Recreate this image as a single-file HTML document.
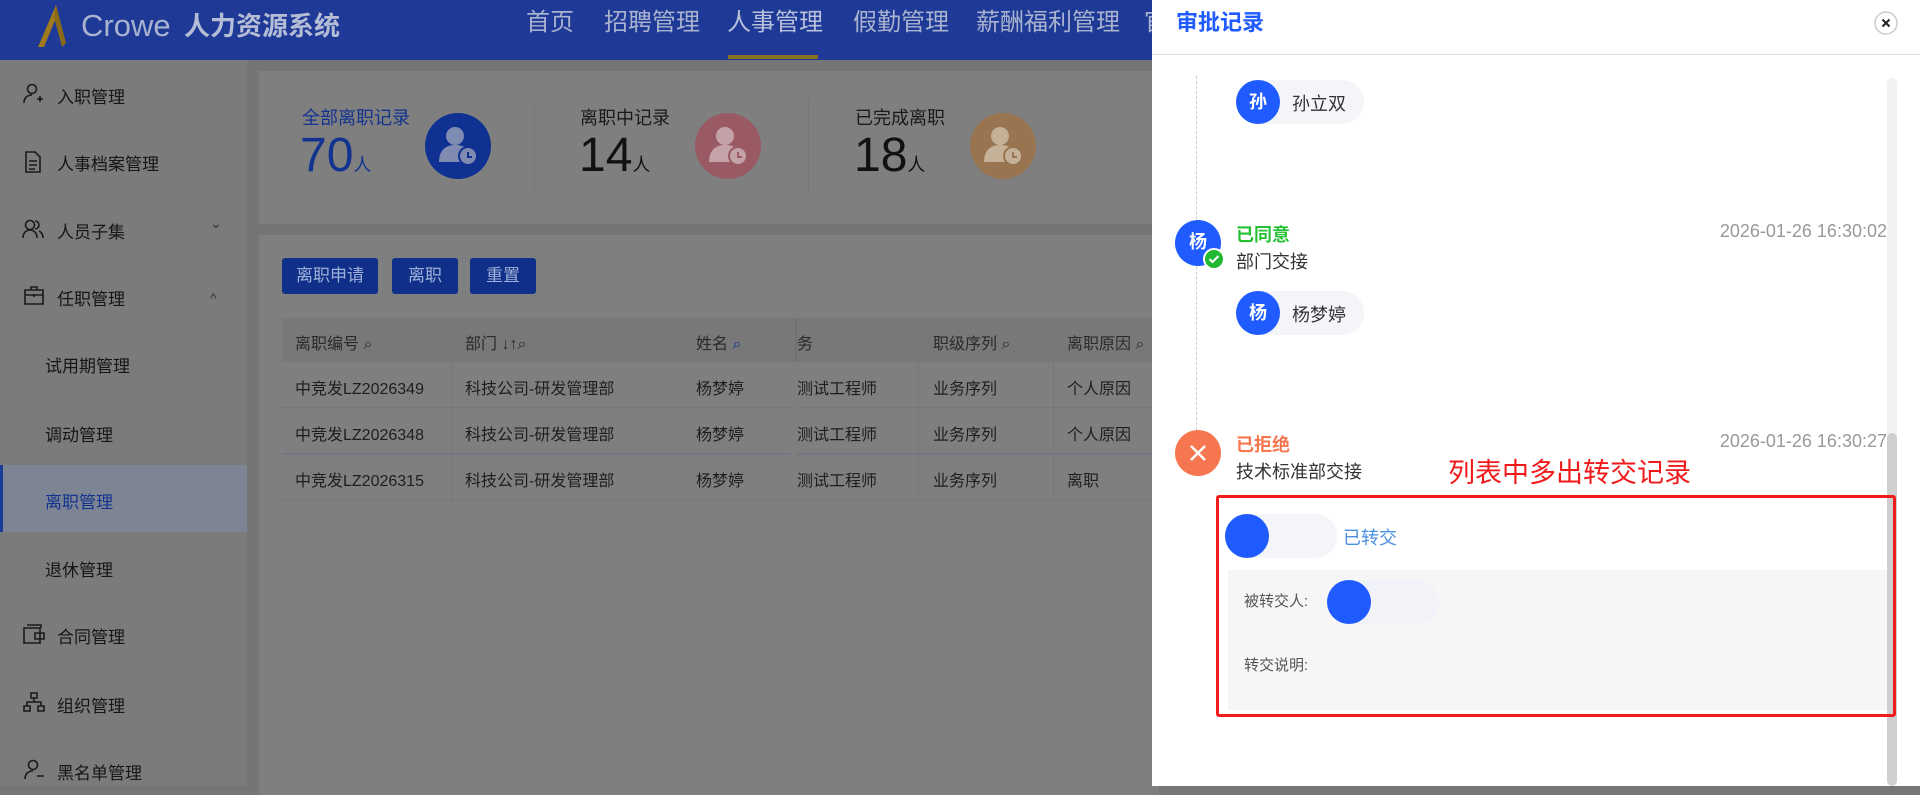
<!DOCTYPE html>
<html><head><meta charset="utf-8"><style>
*{margin:0;padding:0;box-sizing:border-box}
body{width:1920px;height:786px;overflow:hidden;position:relative;background:#757575;font-family:"Liberation Sans","Noto Sans CJK SC",sans-serif;color:#1a1a1a}
.a{position:absolute;white-space:nowrap}
.hdr{left:0;top:0;width:1920px;height:60px;background:#1e3a96}
.nav{top:6px;font-size:24px;color:#a9b2cf;line-height:34px}
.side{left:0;top:60px;width:247px;height:726px;background:#7b7b7b}
.si{left:57px;font-size:17px;color:#161616}
.sub{left:45px;font-size:17px;color:#161616}
.card{background:#7f7f7f}
.btn{top:258px;height:36px;background:#0f2f88;color:#9fb0d8;font-size:17px;line-height:36px;text-align:center;border-radius:3px}
.th{font-size:16px;color:#2a2a2a}
.td{font-size:16px;color:#1e1e1e}
.drawer{left:1152px;top:0;width:768px;height:786px;background:#fff}
.pill{height:44px;border-radius:22px;background:#f4f5f9}
.av{width:44px;height:44px;border-radius:50%;background:#1f5bff;color:#fff;font-size:18px;font-weight:bold;text-align:center;line-height:44px}
.ts{font-size:18px;color:#999}
</style></head><body>
<div class="a hdr"></div>
<svg class="a" style="left:36px;top:3px" width="40" height="44" viewBox="0 0 40 44"><path d="M20 2 L2 44 L8 44 L22 10 Z" fill="#a07a1c"/><path d="M20 2 L30 40 L26 44 L18 14Z" fill="#8a6a18"/></svg>
<div class="a" style="left:81px;top:6px;font-size:31px;color:#a9b2cf;line-height:40px">Crowe</div>
<div class="a" style="left:184px;top:8px;font-size:26px;font-weight:bold;color:#b5bcd6;line-height:36px">人力资源系统</div>
<div class="a nav" style="left:526px">首页</div>
<div class="a nav" style="left:604px">招聘管理</div>
<div class="a nav" style="left:727px;color:#b8c0da">人事管理</div>
<div class="a nav" style="left:853px">假勤管理</div>
<div class="a nav" style="left:976px">薪酬福利管理</div>
<div class="a nav" style="left:1144px">官</div>
<div class="a" style="left:728px;top:55px;width:90px;height:4px;background:#8a6f1c"></div>

<div class="a side"></div>
<svg class="a" style="left:22px;top:83px" width="22" height="22" viewBox="0 0 22 22" fill="none" stroke="#1a1a1a" stroke-width="1.6"><circle cx="10" cy="6" r="4.5"/><path d="M2 20c0-5 3-8 8-8M15 16h6M18 13v6"/></svg>
<div class="a si" style="top:83px">入职管理</div>
<svg class="a" style="left:24px;top:151px" width="18" height="22" viewBox="0 0 18 22" fill="none" stroke="#1a1a1a" stroke-width="1.6"><path d="M2 1h9l5 5v15H2z M5 10h8M5 14h8M5 18h6"/></svg>
<div class="a si" style="top:150px">人事档案管理</div>
<svg class="a" style="left:22px;top:218px" width="22" height="22" viewBox="0 0 22 22" fill="none" stroke="#1a1a1a" stroke-width="1.6"><circle cx="8" cy="7" r="4.5"/><path d="M1 20c0-5 3-8 7-8s7 3 7 8M13 3a4 4 0 0 1 0 8M17 13c2 1 4 3 4 7"/></svg>
<div class="a si" style="top:218px">人员子集</div>
<div class="a" style="left:210px;top:215px;font-size:14px;color:#333">&#8964;</div>
<svg class="a" style="left:24px;top:285px" width="20" height="20" viewBox="0 0 20 20" fill="none" stroke="#1a1a1a" stroke-width="1.6"><path d="M1 5h18v14H1z M7 5V2h6v3 M1 10h18 M10 9v3"/></svg>
<div class="a si" style="top:285px">任职管理</div>
<div class="a" style="left:210px;top:290px;font-size:14px;color:#333">^</div>
<div class="a sub" style="top:352px">试用期管理</div>
<div class="a sub" style="top:421px">调动管理</div>
<div class="a" style="left:0;top:465px;width:247px;height:67px;background:#7d8594"></div>
<div class="a" style="left:0;top:465px;width:3px;height:67px;background:#1a3c96"></div>
<div class="a sub" style="top:488px;color:#12338f">离职管理</div>
<div class="a sub" style="top:556px">退休管理</div>
<svg class="a" style="left:23px;top:624px" width="22" height="20" viewBox="0 0 22 20" fill="none" stroke="#1a1a1a" stroke-width="1.6"><path d="M1 4h16v15H1z M4 1h14v3 M12 9h9v6h-9z"/></svg>
<div class="a si" style="top:623px">合同管理</div>
<svg class="a" style="left:23px;top:692px" width="22" height="20" viewBox="0 0 22 20" fill="none" stroke="#1a1a1a" stroke-width="1.6"><path d="M8 1h6v5H8z M1 14h6v5H1z M15 14h6v5h-6z M11 6v4M4 14v-4h14v4"/></svg>
<div class="a si" style="top:692px">组织管理</div>
<svg class="a" style="left:23px;top:759px" width="22" height="22" viewBox="0 0 22 22" fill="none" stroke="#1a1a1a" stroke-width="1.6"><circle cx="10" cy="6" r="4.5"/><path d="M2 20c0-5 3-8 8-8M14 17h7"/></svg>
<div class="a si" style="top:759px">黑名单管理</div>

<div class="a card" style="left:259px;top:71px;width:900px;height:153px"></div>
<div class="a card" style="left:259px;top:235px;width:900px;height:560px"></div>
<div class="a" style="left:302px;top:104px;font-size:18px;color:#12338f">全部离职记录</div>
<div class="a" style="left:300px;top:128px;font-size:48px;color:#12338f;line-height:56px">70<span style="font-size:18px">人</span></div>
<div class="a" style="left:534px;top:100px;width:1px;height:94px;background:#777"></div>
<div class="a" style="left:580px;top:104px;font-size:18px;color:#1a1a1a">离职中记录</div>
<div class="a" style="left:579px;top:128px;font-size:48px;color:#111;line-height:56px">14<span style="font-size:18px">人</span></div>
<div class="a" style="left:808px;top:100px;width:1px;height:94px;background:#777"></div>
<div class="a" style="left:855px;top:104px;font-size:18px;color:#1a1a1a">已完成离职</div>
<div class="a" style="left:854px;top:128px;font-size:48px;color:#111;line-height:56px">18<span style="font-size:18px">人</span></div>
<svg class="a" style="left:424px;top:112px" width="68" height="68" viewBox="0 0 68 68"><circle cx="34" cy="34" r="33" fill="#0e3192"/><circle cx="31" cy="24" r="9" fill="#7f8bb0"/><path d="M15 50c0-12 7-17 16-17s12 4 12 4v13z" fill="#7f8bb0"/><circle cx="44" cy="44" r="9" fill="#7f8bb0" stroke="#0e3192" stroke-width="2"/><path d="M44 40v5h4" stroke="#0e3192" stroke-width="2" fill="none"/></svg>
<svg class="a" style="left:694px;top:112px" width="68" height="68" viewBox="0 0 68 68"><circle cx="34" cy="34" r="33" fill="#9a5a64"/><circle cx="31" cy="24" r="9" fill="#c4a3a8"/><path d="M15 50c0-12 7-17 16-17s12 4 12 4v13z" fill="#c4a3a8"/><circle cx="44" cy="44" r="9" fill="#c4a3a8" stroke="#9a5a64" stroke-width="2"/><path d="M44 40v5h4" stroke="#9a5a64" stroke-width="2" fill="none"/></svg>
<svg class="a" style="left:969px;top:112px" width="68" height="68" viewBox="0 0 68 68"><circle cx="34" cy="34" r="33" fill="#987550"/><circle cx="31" cy="24" r="9" fill="#c5b098"/><path d="M15 50c0-12 7-17 16-17s12 4 12 4v13z" fill="#c5b098"/><circle cx="44" cy="44" r="9" fill="#c5b098" stroke="#987550" stroke-width="2"/><path d="M44 40v5h4" stroke="#987550" stroke-width="2" fill="none"/></svg>

<div class="a btn" style="left:282px;width:96px">离职申请</div>
<div class="a btn" style="left:392px;width:66px">离职</div>
<div class="a btn" style="left:470px;width:66px">重置</div>

<div class="a" style="left:282px;top:318px;width:880px;height:44px;background:#787878"></div>
<div class="a" style="left:282px;top:362px;width:880px;height:138px;background:#7f7f7f"></div>
<div class="a" style="left:282px;top:407px;width:880px;height:1px;background:#777"></div>
<div class="a" style="left:282px;top:453px;width:880px;height:2px;background:#737680"></div>
<div class="a" style="left:282px;top:500px;width:880px;height:1px;background:#777"></div>
<div class="a" style="left:451px;top:318px;width:1px;height:182px;background:#777"></div>
<div class="a" style="left:682px;top:318px;width:1px;height:44px;background:#777"></div>
<div class="a" style="left:795px;top:318px;width:2px;height:182px;background:#727272"></div>
<div class="a" style="left:918px;top:318px;width:1px;height:182px;background:#777"></div>
<div class="a" style="left:1053px;top:318px;width:1px;height:182px;background:#777"></div>
<div class="a th" style="left:295px;top:330px">离职编号 ⌕</div>
<div class="a th" style="left:465px;top:330px">部门 ↓↑⌕</div>
<div class="a th" style="left:696px;top:330px">姓名 <span style="color:#12338f">⌕</span></div>
<div class="a th" style="left:797px;top:330px">务</div>
<div class="a th" style="left:933px;top:330px">职级序列 ⌕</div>
<div class="a th" style="left:1067px;top:330px">离职原因 ⌕</div>
<div class="a td" style="left:295px;top:375px">中竞发LZ2026349</div><div class="a td" style="left:465px;top:375px">科技公司-研发管理部</div><div class="a td" style="left:696px;top:375px">杨梦婷</div><div class="a td" style="left:797px;top:375px">测试工程师</div><div class="a td" style="left:933px;top:375px">业务序列</div><div class="a td" style="left:1067px;top:375px">个人原因</div>
<div class="a td" style="left:295px;top:421px">中竞发LZ2026348</div><div class="a td" style="left:465px;top:421px">科技公司-研发管理部</div><div class="a td" style="left:696px;top:421px">杨梦婷</div><div class="a td" style="left:797px;top:421px">测试工程师</div><div class="a td" style="left:933px;top:421px">业务序列</div><div class="a td" style="left:1067px;top:421px">个人原因</div>
<div class="a td" style="left:295px;top:467px">中竞发LZ2026315</div><div class="a td" style="left:465px;top:467px">科技公司-研发管理部</div><div class="a td" style="left:696px;top:467px">杨梦婷</div><div class="a td" style="left:797px;top:467px">测试工程师</div><div class="a td" style="left:933px;top:467px">业务序列</div><div class="a td" style="left:1067px;top:467px">离职</div>
<div class="a" style="left:791px;top:362px;width:6px;height:138px;background:#7f7f7f"></div>

<div class="a drawer"></div>
<div class="a" style="left:1176px;top:9px;font-size:22px;font-weight:bold;color:#1f5bff;line-height:28px">审批记录</div>
<svg class="a" style="left:1874px;top:11px" width="24" height="24" viewBox="0 0 24 24"><circle cx="12" cy="12" r="11" fill="#fff" stroke="#ccc" stroke-width="1.5"/><path d="M8.5 8.5l7 7M15.5 8.5l-7 7" stroke="#222" stroke-width="2"/></svg>
<div class="a" style="left:1152px;top:54px;width:768px;height:1px;background:#ddd"></div>
<div class="a" style="left:1196px;top:76px;width:0;height:354px;border-left:1.5px dashed #ccc"></div>
<div class="a" style="left:1887px;top:78px;width:10px;height:708px;background:#f1f1f1;border-radius:5px"></div>
<div class="a" style="left:1887px;top:433px;width:10px;height:353px;background:#cfcfcf;border-radius:5px"></div>

<div class="a pill" style="left:1236px;top:80px;width:128px"></div>
<div class="a av" style="left:1236px;top:80px">孙</div>
<div class="a" style="left:1292px;top:90px;font-size:18px;color:#333">孙立双</div>

<div class="a av" style="left:1175px;top:220px;width:46px;height:46px;line-height:44px">杨</div>
<svg class="a" style="left:1203px;top:248px" width="22" height="22" viewBox="0 0 22 22"><circle cx="11" cy="11" r="10" fill="#21b832" stroke="#fff" stroke-width="2"/><path d="M6.5 11l3 3 6-6" stroke="#fff" stroke-width="2" fill="none"/></svg>
<div class="a" style="left:1236px;top:221px;font-size:18px;font-weight:bold;color:#25c133">已同意</div>
<div class="a ts" style="right:33px;top:221px">2026-01-26 16:30:02</div>
<div class="a" style="left:1236px;top:248px;font-size:18px;color:#333">部门交接</div>
<div class="a pill" style="left:1236px;top:291px;width:128px"></div>
<div class="a av" style="left:1236px;top:291px">杨</div>
<div class="a" style="left:1292px;top:301px;font-size:18px;color:#333">杨梦婷</div>

<svg class="a" style="left:1175px;top:430px" width="46" height="46" viewBox="0 0 46 46"><circle cx="23" cy="23" r="23" fill="#f6764f"/><path d="M16 16l14 14M30 16l-14 14" stroke="#fff" stroke-width="2.5"/></svg>
<div class="a" style="left:1236px;top:431px;font-size:18px;font-weight:bold;color:#f6764f">已拒绝</div>
<div class="a ts" style="right:33px;top:431px">2026-01-26 16:30:27</div>
<div class="a" style="left:1236px;top:458px;font-size:18px;color:#333">技术标准部交接</div>
<div class="a" style="left:1448px;top:456px;font-size:27px;color:#f01a1a;line-height:34px">列表中多出转交记录</div>

<div class="a" style="left:1216px;top:495px;width:680px;height:222px;border:3px solid #f31c1c;border-radius:3px"></div>
<div class="a pill" style="left:1225px;top:514px;width:112px"></div>
<div class="a av" style="left:1225px;top:514px"></div>
<div class="a" style="left:1343px;top:524px;font-size:18px;color:#4a90e2">已转交</div>
<div class="a" style="left:1228px;top:570px;width:659px;height:140px;background:#f6f6f7"></div>
<div class="a pill" style="left:1327px;top:580px;width:112px;background:#f1f3f9"></div>
<div class="a av" style="left:1327px;top:580px"></div>
<div class="a" style="left:1244px;top:590px;font-size:15px;color:#555">被转交人:</div>
<div class="a" style="left:1244px;top:654px;font-size:15px;color:#555">转交说明:</div>
</body></html>
